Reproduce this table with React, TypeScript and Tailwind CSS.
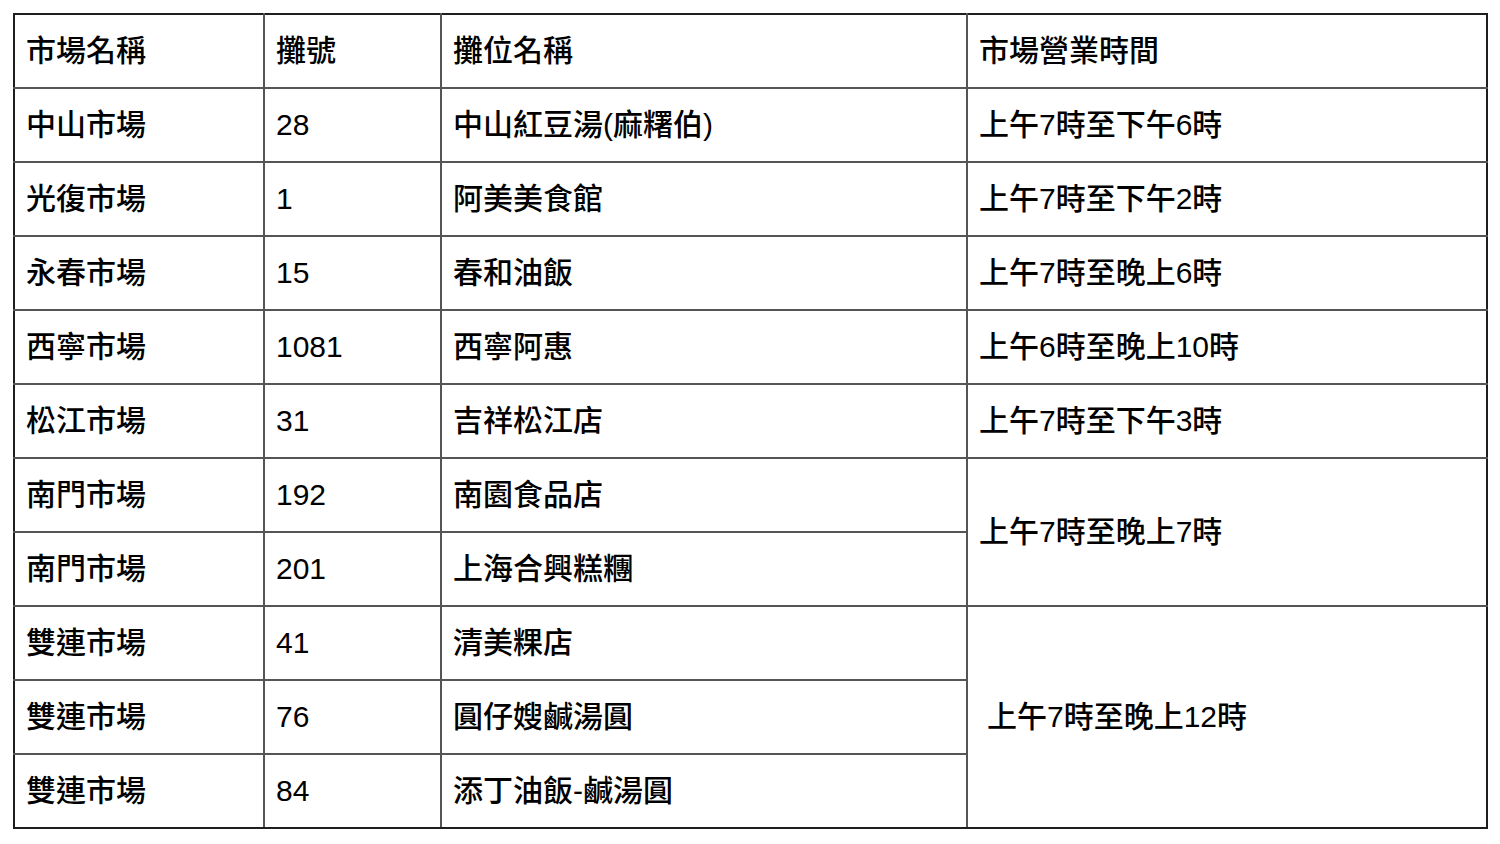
import React from 'react';

interface Stall {
  market: string;
  no: string;
  name: string;
  hours?: string;
  span?: number;
  indent?: boolean;
}

const rows: Stall[] = [
  { market: '中山市場', no: '28', name: '中山紅豆湯(麻糬伯)', hours: '上午7時至下午6時' },
  { market: '光復市場', no: '1', name: '阿美美食館', hours: '上午7時至下午2時' },
  { market: '永春市場', no: '15', name: '春和油飯', hours: '上午7時至晚上6時' },
  { market: '西寧市場', no: '1081', name: '西寧阿惠', hours: '上午6時至晚上10時' },
  { market: '松江市場', no: '31', name: '吉祥松江店', hours: '上午7時至下午3時' },
  { market: '南門市場', no: '192', name: '南園食品店', hours: '上午7時至晚上7時', span: 2 },
  { market: '南門市場', no: '201', name: '上海合興糕糰' },
  { market: '雙連市場', no: '41', name: '清美粿店', hours: '上午7時至晚上12時', span: 3, indent: true },
  { market: '雙連市場', no: '76', name: '圓仔嫂鹹湯圓' },
  { market: '雙連市場', no: '84', name: '添丁油飯-鹹湯圓' },
];

// inner grid lines are grey, the outer frame is near black
const cell = 'border-2 border-[#555] pl-[11px] text-left align-middle font-medium';
const left = 'border-l-[#1e1e1e]';
const right = 'border-r-[#1e1e1e]';
const top = 'border-t-[#1e1e1e]';
const bottom = 'border-b-[#1e1e1e]';

export default function App() {
  const last = rows.length - 1;
  return (
    <div
      className="min-h-screen bg-white pl-[13px] pt-[13px] text-[30px] leading-none text-black"
      style={{ fontFamily: '"Liberation Sans", "Noto Sans CJK TC", sans-serif' }}
    >
      <table className="w-[1473px] table-fixed border-collapse">
        <colgroup>
          <col className="w-[250px]" />
          <col className="w-[177px]" />
          <col className="w-[526px]" />
          <col className="w-[520px]" />
        </colgroup>
        <thead>
          <tr className="h-[74px]">
            <th className={`${cell} ${top} ${left}`}>市場名稱</th>
            <th className={`${cell} ${top}`}>攤號</th>
            <th className={`${cell} ${top}`}>攤位名稱</th>
            <th className={`${cell} ${top} ${right}`}>市場營業時間</th>
          </tr>
        </thead>
        <tbody>
          {rows.map((r, idx) => {
            const b = idx === last ? bottom : '';
            const hoursEnd = idx + (r.span ?? 1) - 1 === last;
            return (
              <tr key={idx} className="h-[74px]">
                <td className={`${cell} ${left} ${b}`}>{r.market}</td>
                <td className={`${cell} ${b}`}>{r.no}</td>
                <td className={`${cell} ${b}`}>{r.name}</td>
                {r.hours && (
                  <td rowSpan={r.span} className={`${cell} ${right} ${hoursEnd ? bottom : ''}`}>
                    <span className={r.indent ? 'pl-[8px]' : ''}>{r.hours}</span>
                  </td>
                )}
              </tr>
            );
          })}
        </tbody>
      </table>
    </div>
  );
}
